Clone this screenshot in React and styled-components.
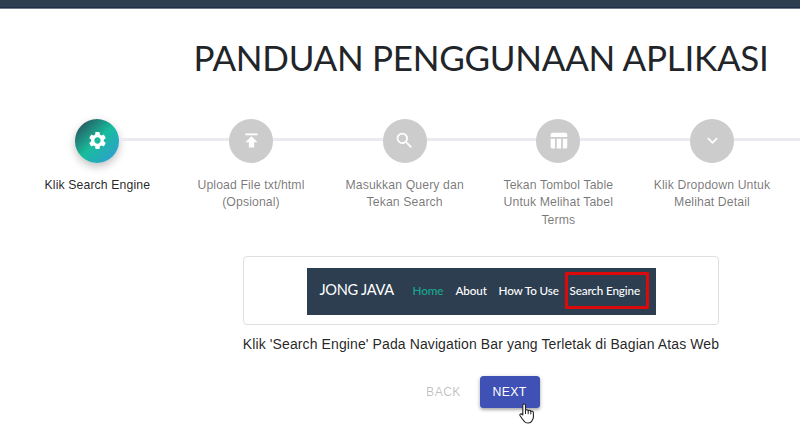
import React from "react";
import styled, { createGlobalStyle } from "styled-components";
import { MdSettings, MdPublish, MdSearch, MdTableChart, MdExpandMore } from "react-icons/md";

const GlobalStyle = createGlobalStyle`
  * { box-sizing: border-box; }
  body { margin: 0; background: #fff; overflow: hidden; }
`;

const Viewport = styled.div`
  width: 800px;
  height: 431px;
  overflow: hidden;
  background: #fff;
  font-family: "Liberation Sans", Arial, sans-serif;
`;

const Page = styled.main`
  width: 962px;
  display: flex;
  flex-direction: column;
  align-items: center;
`;

const TopBar = styled.header`
  width: 100%;
  height: 9px;
  background: #2c3e50;
  border-bottom: 1px solid #6e7b8b;
  box-shadow: inset 0 -1px 0 #1f3048;
`;

const Title = styled.h1`
  margin: 27px 0 0;
  font: 400 35px/42px Lato, sans-serif;
  letter-spacing: -0.27px;
  color: #212529;
  white-space: nowrap;
`;

const Stepper = styled.div`
  width: 923px;
  height: 137px;
  margin-top: 41px;
  padding-left: 1px;
  display: grid;
  grid-template-columns: repeat(6, 1fr);
`;

const Step = styled.div`
  display: flex;
  flex-direction: column;
  align-items: center;
`;

const StepHead = styled.div`
  width: 100%;
  display: flex;
  align-items: center;
`;

const Line = styled.div`
  flex: 1;
  height: 3px;
  margin-bottom: 3px;
  background: ${({ $hidden }) => ($hidden ? "transparent" : "#eaeaf0")};
`;

const Circle = styled.div`
  width: 43.75px;
  height: 43.75px;
  border-radius: 50%;
  display: flex;
  align-items: center;
  justify-content: center;
  color: #fff;
  font-size: 21px;
  background: ${({ $active }) =>
    $active
      ? "linear-gradient(136deg, #2c3e50 0%, #18bc9c 50%, #3498db 100%)"
      : "#ccc"};
  box-shadow: ${({ $active }) => ($active ? "0 3.5px 9px rgba(0,0,0,.25)" : "none")};
`;

const StepLabel = styled.div`
  width: 136px;
  margin-top: 14px;
  text-align: center;
  font-size: 12.25px;
  line-height: 17.5px;
  letter-spacing: 0.11px;
  white-space: pre-line;
  color: ${({ $active }) => ($active ? "rgba(0,0,0,.87)" : "rgba(0,0,0,.54)")};
`;

const Card = styled.section`
  width: 476px;
  height: 69px;
  border: 1px solid #dfdfdf;
  border-radius: 4px;
  display: flex;
  align-items: center;
  justify-content: center;
  padding-top: 1px;
`;

const NavPreview = styled.div`
  width: 349px;
  height: 47px;
  background: #2c3e50;
  display: flex;
  align-items: center;
  padding: 0 7px 2px 13px;
  font-family: Lato, sans-serif;
  color: #fff;
  white-space: nowrap;
`;

const Brand = styled.span`
  width: 93px;
  font-size: 14.6px;
  letter-spacing: -0.3px;
  padding-bottom: 1px;
`;

const NavItem = styled.span`
  width: ${({ $width }) => $width}px;
  font-size: 11.7px;
  font-weight: 500;
  letter-spacing: -0.14px;
  padding-bottom: 1px;
  color: ${({ $active }) => ($active ? "#18a88f" : "#fff")};
`;

const Highlighted = styled.span`
  width: 84px;
  height: 37px;
  border: 3px solid #dc0a0a;
  border-radius: 1px;
  display: flex;
  align-items: center;
  padding: 0 0 1px 2px;
  font-size: 11.7px;
  font-weight: 500;
  letter-spacing: -0.14px;
`;

const Caption = styled.p`
  margin: 9px 0 0;
  font-size: 14px;
  line-height: 21px;
  letter-spacing: 0.104px;
  color: rgba(0, 0, 0, 0.87);
  white-space: nowrap;
`;

const Actions = styled.div`
  display: flex;
  margin: 21px 8px 0 0;
  gap: 7px;
`;

const Button = styled.button`
  position: relative;
  height: 32px;
  width: ${({ $primary }) => ($primary ? 60 : 58)}px;
  padding: 0;
  border: 0;
  border-radius: 3.5px;
  font: 400 12.25px/21px "Liberation Sans", Arial, sans-serif;
  letter-spacing: 0.35px;
  color: ${({ $primary }) => ($primary ? "#fff" : "rgba(0,0,0,.26)")};
  background: ${({ $primary }) => ($primary ? "#3f51b5" : "transparent")};
  box-shadow: ${({ $primary }) =>
    $primary ? "0 2px 3px rgba(0,0,0,.24), 0 1px 5px rgba(0,0,0,.16)" : "none"};
`;

const Pointer = styled.svg`
  position: absolute;
  left: 38.5px;
  top: 26.5px;
  width: 17px;
  height: 22px;
`;

const steps = [
  { icon: MdSettings, label: "Klik Search Engine", active: true },
  { icon: MdPublish, label: "Upload File txt/html\n(Opsional)" },
  { icon: MdSearch, label: "Masukkan Query dan\nTekan Search" },
  { icon: MdTableChart, label: "Tekan Tombol Table\nUntuk Melihat Tabel\nTerms" },
  { icon: MdExpandMore, label: "Klik Dropdown Untuk\nMelihat Detail" },
];

export default function App() {
  return (
    <Viewport>
      <GlobalStyle />
      <Page>
        <TopBar />
        <Title>PANDUAN PENGGUNAAN APLIKASI</Title>
        <Stepper>
          {steps.map(({ icon: Icon, label, active }, i) => (
            <Step key={label}>
              <StepHead>
                <Line $hidden={i === 0} />
                <Circle $active={active}>
                  <Icon />
                </Circle>
                <Line />
              </StepHead>
              <StepLabel $active={active}>{label}</StepLabel>
            </Step>
          ))}
          <Step>
            <StepHead>
              <Line />
              <Circle />
              <Line $hidden />
            </StepHead>
          </Step>
        </Stepper>
        <Card>
          <NavPreview>
            <Brand>JONG JAVA</Brand>
            <NavItem $width={43} $active>Home</NavItem>
            <NavItem $width={43}>About</NavItem>
            <NavItem $width={66}>How To Use</NavItem>
            <Highlighted>Search Engine</Highlighted>
          </NavPreview>
        </Card>
        <Caption>Klik 'Search Engine' Pada Navigation Bar yang Terletak di Bagian Atas Web</Caption>
        <Actions>
          <Button disabled>BACK</Button>
          <Button $primary>
            NEXT
            <Pointer viewBox="0 0 17 22">
              <path
                d="M4.8 12V2.4c0-1.9 2.7-1.9 2.7 0v5c.5-1 2.4-.8 2.7.4.7-.9 2.4-.5 2.6.7 1-.8 2.6-.2 2.6 1.2v4.6c0 1.6-1 2.5-1.6 3.7-1 2.6-6.2 2.6-7.7.2-1.4-1.6-2.6-3.3-4-5.4-1-1.7 1-2.8 2.7-.8z"
                fill="#fff"
                stroke="#222"
                strokeWidth="1.1"
                strokeLinejoin="round"
              />
              <path d="M7.5 7.4v3.6M10.2 7.8v3.3M12.8 8.6v2.7" stroke="#222" strokeWidth="1" />
            </Pointer>
          </Button>
        </Actions>
      </Page>
    </Viewport>
  );
}
